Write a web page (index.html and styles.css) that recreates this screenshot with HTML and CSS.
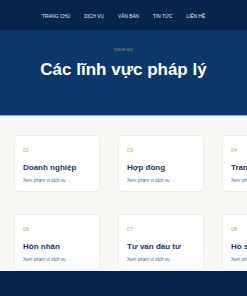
FILE: index.html
```html
<!DOCTYPE html>
<html lang="vi">
<head>
<meta charset="utf-8">
<link rel="stylesheet" href="styles.css">
</head>
<body>
<nav class="nav">
  <a class="nav-link">TRANG CHỦ</a>
  <a class="nav-link">DỊCH VỤ</a>
  <a class="nav-link">VĂN BẢN</a>
  <a class="nav-link">TIN TỨC</a>
  <a class="nav-link">LIÊN HỆ</a>
</nav>
<header class="hero">
  <div class="eyebrow">DỊCH VỤ</div>
  <h1 class="hero-title">Các lĩnh vực pháp lý</h1>
</header>
<section class="areas">
  <div class="grid">
    <div class="card"><div class="num">02</div><div class="title">Doanh nghiệp</div><div class="more">Xem phạm vi dịch vụ →</div></div>
    <div class="card"><div class="num">03</div><div class="title">Hợp đồng</div><div class="more">Xem phạm vi dịch vụ →</div></div>
    <div class="card"><div class="num">04</div><div class="title">Tranh chấp</div><div class="more">Xem phạm vi dịch vụ →</div></div>
    <div class="card"><div class="num">06</div><div class="title">Hôn nhân</div><div class="more">Xem phạm vi dịch vụ →</div></div>
    <div class="card"><div class="num">07</div><div class="title">Tư vấn đầu tư</div><div class="more">Xem phạm vi dịch vụ →</div></div>
    <div class="card"><div class="num">08</div><div class="title">Hồ sơ pháp lý</div><div class="more">Xem phạm vi dịch vụ →</div></div>
  </div>
</section>
<footer class="footer"></footer>
</body>
</html>
```
FILE: styles.css
```css
* { box-sizing: border-box; }
html, body { margin: 0; padding: 0; }
body {
  font-family: "Liberation Sans", Arial, sans-serif;
  background: #07244a;
  overflow: hidden;
  width: 247px;
}
.nav {
  height: 30px;
  background: #07244a;
  display: flex;
  justify-content: center;
  align-items: center;
  gap: 14px;
  padding-top: 3px;
}
.nav-link {
  color: #e6ebf2;
  font-size: 4.8px;
  letter-spacing: 0;
}
.hero {
  background: #0d3769;
  height: 86px;
  border-bottom: 1px solid #8ea3c2;
  text-align: center;
  padding-top: 17px;
}
.eyebrow {
  color: #c9a665;
  font-size: 4.2px;
  letter-spacing: 0.2px;
}
.hero-title {
  margin: 9px 0 0;
  color: #ffffff;
  font-size: 17px;
  font-weight: 700;
  line-height: 1;
}
.areas {
  background: #f8f7f3;
  padding: 19px 0 0 14px;
  height: 155px;
}
.grid {
  display: grid;
  grid-template-columns: repeat(3, 86px);
  column-gap: 18px;
  row-gap: 22px;
}
.card {
  background: #ffffff;
  border: 1px solid #eeece6;
  border-radius: 4px;
  height: 57px;
  padding: 11px 0 0 8px;
  white-space: nowrap;
}
.num {
  color: #d4a24f;
  font-size: 5.5px;
}
.title {
  margin-top: 10px;
  color: #1b3560;
  font-size: 8px;
  font-weight: 700;
}
.more {
  margin-top: 6px;
  color: #41649a;
  font-size: 4.6px;
}
.footer {
  height: 25px;
  background: #07244a;
}
```
